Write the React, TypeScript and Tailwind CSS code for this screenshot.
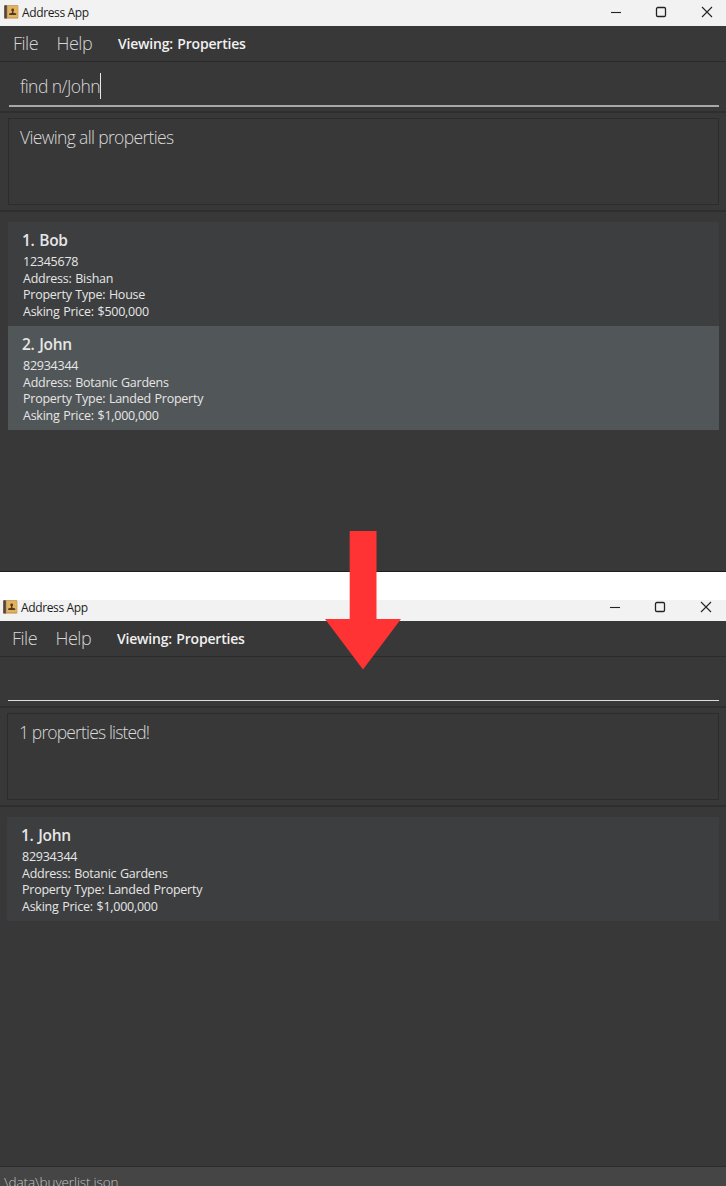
import React from "react";

type Property = {
  name: string;
  phone: string;
  address: string;
  kind: string;
  price: string;
  selected?: boolean;
};

function BookIcon() {
  return (
    <svg width="15" height="14" viewBox="0 0 15 14" className="shrink-0">
      <rect x="0.3" y="0.3" width="14" height="13.2" rx="0.8" fill="#b58a45" />
      <rect x="4" y="1" width="9.8" height="11.6" fill="#e3b25e" />
      <rect x="0.3" y="0.3" width="2.6" height="13.2" rx="0.6" fill="#51433f" />
      <rect x="2.9" y="0.6" width="0.9" height="12.7" fill="#c9a878" />
      <circle cx="8.7" cy="4.9" r="1.4" fill="#4c3b20" />
      <path d="M8 5.500h1.400v2.300l2.800.8v1.400H5.200V8.600l2.800-.8z" fill="#4c3b20" />
    </svg>
  );
}

function WindowControls() {
  return (
    <svg width="104" height="14" viewBox="0 0 104 14" fill="none" stroke="#222" strokeWidth="1.1" className="shrink-0">
      <path d="M1 7.500h10" />
      <rect x="46.500" y="2.500" width="9" height="9" rx="1.300" strokeWidth="1.300" />
      <path d="M92 2l10 10M102 2L92 12" />
    </svg>
  );
}

function TitleBar({ className }: { className: string }) {
  return (
    <div className={`flex items-start justify-between bg-[#f2f2f2] ${className}`}>
      <div className="flex gap-[3px]">
        <BookIcon />
        <span className="text-[12px] leading-[15px] tracking-[-0.36px] text-[#1c1c1c]">Address App</span>
      </div>
      <WindowControls />
    </div>
  );
}

function MenuBar({ className }: { className: string }) {
  return (
    <div className={`flex h-[36px] items-center border-b border-b-[#2b2b2b] text-[#d6d6d6] ${className}`}>
      <span className="w-[43.500px] text-[18px] font-light tracking-[-0.5px]">File</span>
      <span className="w-[61.500px] text-[18px] font-light tracking-[-0.5px]">Help</span>
      <span className="text-[14px] font-semibold tracking-[-0.2px] text-[#f0f0f0] [word-spacing:1px]">
        Viewing: Properties
      </span>
    </div>
  );
}

function PropertyCard({ item }: { item: Property }) {
  return (
    <div
      className={`h-[104px] pt-[8px] pl-[15px] text-[12.500px] leading-[16.800px] tracking-[-0.25px] text-[#e6e6e6] [word-spacing:0.7px] ${
        item.selected ? "bg-[#515658]" : "bg-[#3c3e3f]"
      }`}
    >
      <div className="mb-[3.800px] -ml-px text-[15.500px] leading-[20px] font-semibold tracking-[-0.3px] [word-spacing:1px]">
        {item.name}
      </div>
      <div>{item.phone}</div>
      <div>Address: {item.address}</div>
      <div>Property Type: {item.kind}</div>
      <div>Asking Price: {item.price}</div>
    </div>
  );
}

function ResultBox({ text, className }: { text: string; className: string }) {
  return (
    <div className={`border-y-2 border-y-[#2e2e2e] pt-[5px] pr-[7px] pb-[5px] ${className}`}>
      <div className="h-[87px] border border-[#2c2c2c] pt-[6px] pl-[11px] text-[17.500px] leading-[24px] font-light text-[#d8d8d8]">
        {text}
      </div>
    </div>
  );
}

const john = {
  phone: "82934344",
  address: "Botanic Gardens",
  kind: "Landed Property",
  price: "$1,000,000",
};

export default function App() {
  return (
    <div className="relative flex h-[1186px] w-[726px] flex-col overflow-hidden bg-white font-['Open_Sans','Noto_Sans',sans-serif]">
      <section className="flex h-[572px] flex-col border-b border-b-[#1d1d1d] bg-[#383838]">
        <TitleBar className="h-[26px] pt-[5px] pr-[12px] pl-[4px]" />
        <MenuBar className="pl-[13px]" />
        <div className="h-[49px] pr-[7px] pl-[9px]">
          <div className="flex h-[45px] items-center border-b-2 border-b-[#a8a8a8] pt-[5px] pl-[11px] text-[17.500px] font-light tracking-[-0.55px] text-[#d8d8d8]">
            <span>find n/John</span>
            <span className="h-[26px] w-px bg-[#e8e8e8]" />
          </div>
        </div>
        <ResultBox text="Viewing all properties" className="pl-[8px] tracking-[-0.65px]" />
        <div className="pt-[10px] pr-[7px] pl-[8px]">
          <PropertyCard item={{ name: "1. Bob", phone: "12345678", address: "Bishan", kind: "House", price: "$500,000" }} />
          <PropertyCard item={{ name: "2. John", ...john, selected: true }} />
        </div>
      </section>

      <section className="mt-[28px] flex grow flex-col bg-[#383838]">
        <TitleBar className="h-[21px] pr-[13px] pl-[3px]" />
        <MenuBar className="pl-[12px]" />
        <div className="h-[49px] pr-[7px] pl-[8px]">
          <div className="h-[44px] border-b border-b-[#dcdcdc]" />
        </div>
        <ResultBox text="1 properties listed!" className="pl-[7px] tracking-[-0.85px]" />
        <div className="grow pt-[10px] pr-[7px] pl-[7px]">
          <PropertyCard item={{ name: "1. John", ...john }} />
        </div>
        <footer className="h-[20px] overflow-hidden border-t border-t-[#2b2b2b] bg-[#454545] pt-[5px] pl-[1px] text-[13.500px] leading-[20px] font-light tracking-[-0.1px] text-[#c4c4c4]">
          .\data\buyerlist.json
        </footer>
      </section>

      <svg width="76" height="139" viewBox="0 0 76 139" className="absolute top-[531px] left-[325px]">
        <path d="M24.700 0h26.800v88H76L38 138.500 0 88h24.700z" fill="#ff3333" />
      </svg>
    </div>
  );
}
